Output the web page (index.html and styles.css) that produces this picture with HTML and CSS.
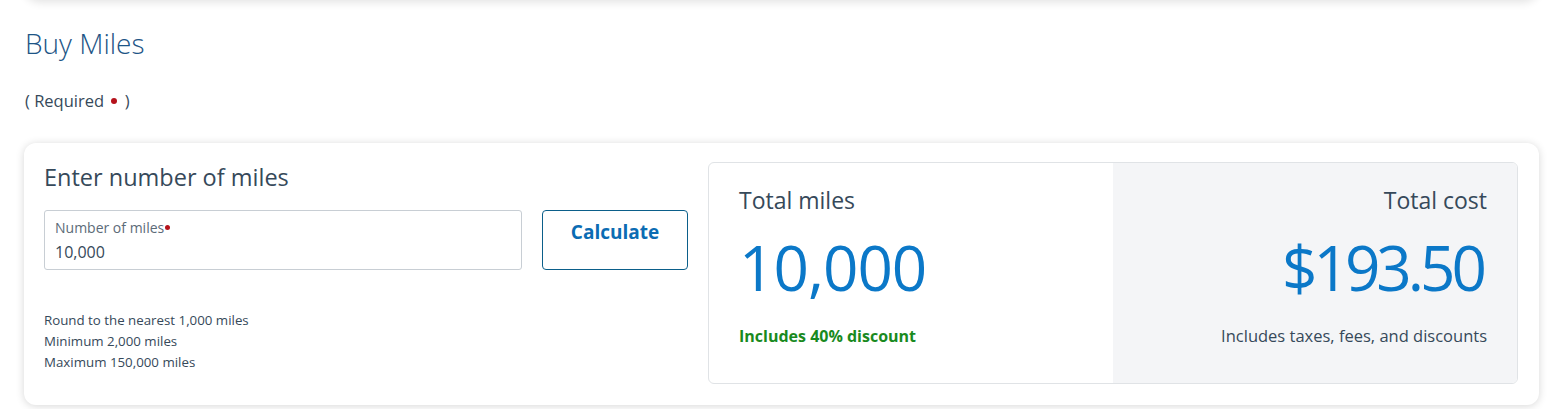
FILE: index.html
```html
<!DOCTYPE html>
<html lang="en">
<head>
<meta charset="utf-8">
<title>Buy Miles</title>
<link rel="stylesheet" href="styles.css">
</head>
<body>
<div class="page">
  <div class="top-card"></div>
  <h1 class="title">Buy Miles</h1>
  <p class="required">( Required <span class="dot"></span> )</p>
  <section class="card">
    <div class="entry">
      <h2 class="entry-title">Enter number of miles</h2>
      <div class="entry-row">
        <label class="field">
          <span class="field-label">Number of miles<span class="req-dot"></span></span>
          <span class="field-value">10,000</span>
        </label>
        <button class="calc" type="button">Calculate</button>
      </div>
      <ul class="hints">
        <li>Round to the nearest 1,000 miles</li>
        <li>Minimum 2,000 miles</li>
        <li>Maximum 150,000 miles</li>
      </ul>
    </div>
    <div class="summary">
      <div class="sum-col sum-miles">
        <div class="sum-label">Total miles</div>
        <div class="sum-value">10,000</div>
        <div class="sum-note green">Includes 40% discount</div>
      </div>
      <div class="sum-col sum-cost">
        <div class="sum-label">Total cost</div>
        <div class="sum-value">$193.50</div>
        <div class="sum-note">Includes taxes, fees, and discounts</div>
      </div>
    </div>
  </section>
</div>
</body>
</html>
```
FILE: styles.css
```css
* { box-sizing: border-box; }
html, body { margin: 0; padding: 0; background: #ffffff; }
body {
  font-family: "Open Sans", "Noto Sans", "Liberation Sans", sans-serif;
  color: #36495a;
}
.page {
  padding: 0 21px 0 24px;
  overflow: hidden;
  height: 409px;
}
.top-card {
  height: 40px;
  margin: -40px 0 0 0;
  border-radius: 0 0 16px 16px;
  background: #fff;
  box-shadow: 0 2px 10px rgba(0,0,0,0.12);
}
.title {
  margin: 26px 0 0 1px;
  font-size: 28px;
  font-weight: 300;
  line-height: 34px;
  color: #1d5586;
}
.required {
  margin: 31px 0 0 1px;
  font-size: 16.5px;
  line-height: 20px;
  color: #36495a;
}
.dot, .req-dot {
  display: inline-block;
  border-radius: 50%;
  background: #b5121b;
}
.dot {
  width: 6px;
  height: 6px;
  margin: 0 3px;
  vertical-align: 3px;
}
.req-dot {
  width: 5px;
  height: 5px;
  margin-left: 1px;
  vertical-align: 3px;
}
.card {
  margin-top: 32px;
  height: 262px;
  border-radius: 12px;
  background: #fff;
  box-shadow: 0 1px 8px rgba(0,0,0,0.16);
  padding: 19px 21px 21px 20px;
  display: flex;
  gap: 20px;
}
.entry {
  width: 644px;
  flex: none;
}
.entry-title {
  margin: 0;
  font-size: 23.5px;
  font-weight: 400;
  line-height: 30px;
  color: #36495a;
}
.entry-row {
  margin-top: 18px;
  display: flex;
  gap: 20px;
}
.field {
  width: 478px;
  height: 60px;
  border: 1px solid #c8ced4;
  border-radius: 3px;
  padding: 7px 10px 0 10px;
  display: flex;
  flex-direction: column;
}
.field-label {
  font-size: 14px;
  line-height: 20px;
  color: #5c6b78;
}
.field-value {
  margin-top: 3px;
  font-size: 16px;
  line-height: 22px;
  color: #36495a;
}
.calc {
  width: 146px;
  height: 60px;
  border: 1px solid #0b5f8a;
  border-radius: 4px;
  background: #fff;
  color: #0b6cb3;
  font-family: inherit;
  font-size: 19px;
  font-weight: 700;
  padding: 8px 0 0 0;
  display: flex;
  justify-content: center;
  align-items: flex-start;
}
.hints {
  list-style: none;
  margin: 40px 0 0 0;
  padding: 0;
  font-size: 13.3px;
  line-height: 21px;
  color: #36495a;
}
.summary {
  flex: 1;
  display: flex;
  border: 1px solid #e0e3e6;
  border-radius: 6px;
  overflow: hidden;
}
.sum-col {
  flex: 1;
  padding: 22px 30px 0 30px;
  display: flex;
  flex-direction: column;
}
.sum-cost {
  background: #f4f5f7;
  align-items: flex-end;
  text-align: right;
}
.sum-label {
  font-size: 23px;
  line-height: 30px;
  color: #36495a;
}
.sum-value {
  margin-top: 12px;
  font-size: 62px;
  font-weight: 400;
  line-height: 80px;
  color: #0b78c8;
  letter-spacing: -1px;
}
.sum-cost .sum-value {
  letter-spacing: -4px;
  margin-right: 4px;
}
.sum-note {
  margin-top: 18px;
  font-size: 16.5px;
  line-height: 22px;
  color: #36495a;
}
.sum-note.green {
  font-size: 16px;
  color: #198a1e;
  font-weight: 700;
}
```
